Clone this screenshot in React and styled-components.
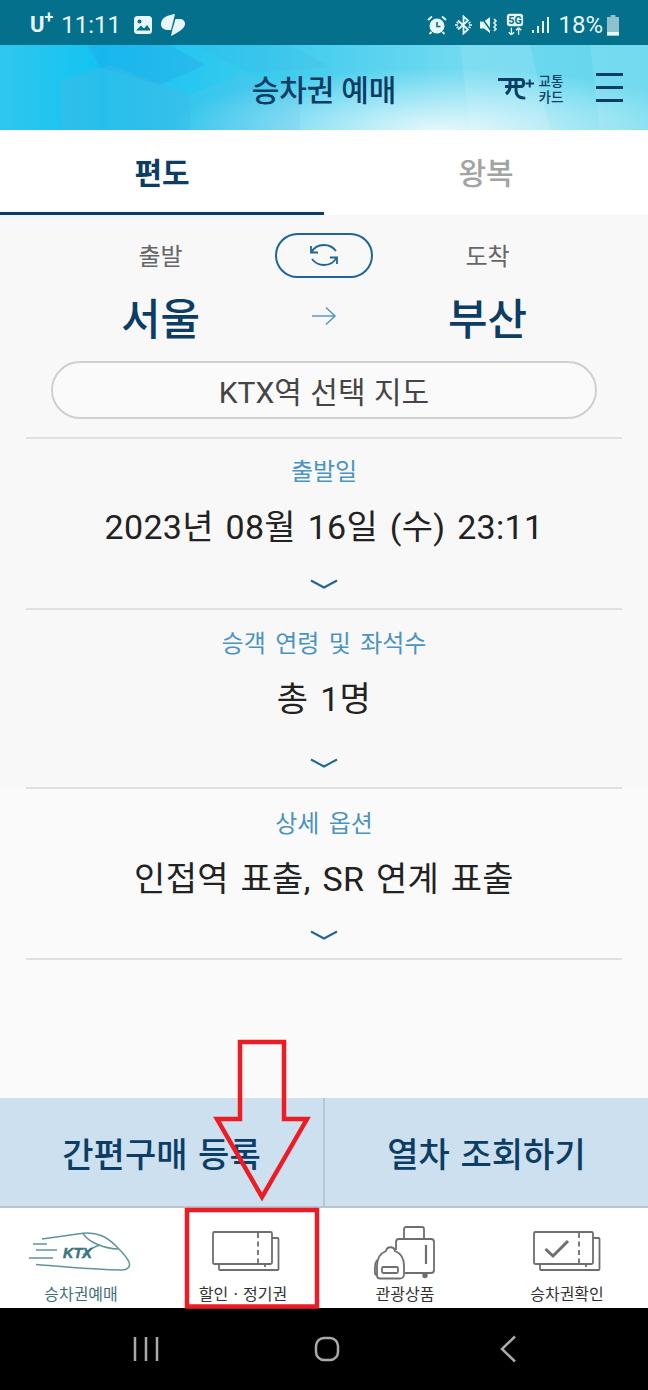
import React from 'react';
import styled, { createGlobalStyle } from 'styled-components';

const navy = '#0c3d64';
const blue = '#4a94c4';
const hangul = '"Noto Sans CJK KR", "Noto Sans", sans-serif';

const GlobalStyle = createGlobalStyle`
  html, body {
    margin: 0;
    padding: 0;
    background: #000;
  }
  body {
    font-family: ${hangul};
  }
`;

const Page = styled.div`
  position: relative;
  width: 648px;
  height: 1390px;
  display: flex;
  flex-direction: column;
  overflow: hidden;
  background: #f8f8f8;
`;

const StatusBar = styled.div`
  height: 45px;
  flex: none;
  box-sizing: border-box;
  padding: 4px 28px 0 30px;
  display: flex;
  align-items: center;
  justify-content: space-between;
  background: #04708c;
  color: #e8f6f9;
  font-family: "Roboto", sans-serif;
  font-size: 24px;
`;

const StatusGroup = styled.div`
  display: flex;
  align-items: center;
  gap: ${({ $gap }) => $gap || 6}px;
`;

const Carrier = styled.span`
  font-weight: 700;
  font-size: 22px;
  sup {
    font-size: 16px;
    line-height: 0;
    vertical-align: 9px;
  }
`;

const Header = styled.header`
  position: relative;
  height: 85px;
  flex: none;
  display: grid;
  grid-template-columns: 1fr auto 1fr;
  align-items: center;
  padding: 0 25px;
  box-sizing: border-box;
  overflow: hidden;
  background:
    radial-gradient(ellipse 270px 62px at 440px 85px, rgba(255, 255, 255, 0.82), rgba(255, 255, 255, 0)),
    linear-gradient(90deg, #2fc7ee 0%, #12c3f2 16%, #3ccbee 42%, #6fd9f0 70%, #63d6ee 100%);
`;

const HeaderArt = styled.svg`
  position: absolute;
  inset: 0;
`;

const Title = styled.h1`
  grid-column: 2;
  position: relative;
  margin: 0;
  font-size: 30px;
  font-weight: 500;
  color: ${navy};
  line-height: 1;
`;

const HeaderActions = styled.div`
  grid-column: 3;
  position: relative;
  justify-self: end;
  display: flex;
  align-items: center;
  gap: 32px;
`;

const CardLink = styled.div`
  display: flex;
  align-items: center;
  gap: 1px;
`;

const CardText = styled.span`
  font-size: 13.5px;
  line-height: 16px;
  color: ${navy};
  text-align: center;
  font-weight: 500;
  width: 26px;
  flex: none;
`;

const Menu = styled.div`
  width: 27px;
  height: 29px;
  display: flex;
  flex-direction: column;
  justify-content: space-between;
  span {
    display: block;
    height: 3px;
    background: ${navy};
  }
`;

const Tabs = styled.nav`
  height: 85px;
  flex: none;
  display: grid;
  grid-template-columns: 324px 1fr;
  background: #fff;
`;

const Tab = styled.div`
  display: flex;
  align-items: center;
  justify-content: center;
  box-sizing: border-box;
  font-size: 30px;
  font-weight: ${({ $active }) => ($active ? 700 : 500)};
  color: ${({ $active }) => ($active ? navy : '#a3a3a3')};
  border-bottom: 3px solid ${({ $active }) => ($active ? navy : 'transparent')};
`;

const Main = styled.main`
  flex: 1;
  min-height: 0;
  display: flex;
  flex-direction: column;
  background: #f8f8f8;
`;

const Route = styled.section`
  display: grid;
  grid-template-columns: 1fr 98px 1fr;
  grid-template-rows: 44px 78px;
  padding: 18px 0 6px;
  align-items: center;
  justify-items: center;
`;

const Place = styled.div`
  width: 100%;
  box-sizing: border-box;
  text-align: center;
  padding: ${({ $side }) => ($side === 'left' ? '0 0 0 46px' : '0 46px 0 0')};
`;

const PlaceLabel = styled(Place)`
  font-size: 24px;
  color: #666;
  line-height: 1;
`;

const PlaceName = styled(Place)`
  font-size: 43px;
  font-weight: 500;
  color: ${navy};
  line-height: 1;
`;

const SwapButton = styled.div`
  width: 98px;
  height: 45px;
  box-sizing: border-box;
  border: 2px solid #1f6695;
  border-radius: 23px;
  display: flex;
  align-items: center;
  justify-content: center;
`;

const MapButton = styled.div`
  height: 58px;
  margin: 0 51px 18px;
  box-sizing: border-box;
  border: 2px solid #cfcfcf;
  border-radius: 29px;
  display: flex;
  align-items: center;
  justify-content: center;
  font-family: "Roboto", ${hangul};
  font-size: 30px;
  word-spacing: 1px;
  color: #454545;
  background: #fafafa;
`;

const Option = styled.section`
  height: ${({ $height }) => $height}px;
  margin: 0 26px;
  box-sizing: border-box;
  border-top: 2px solid #e0e0e0;
  padding-top: ${({ $pad }) => $pad}px;
  display: flex;
  flex-direction: column;
  align-items: center;
`;

const OptionLabel = styled.div`
  font-size: 24px;
  line-height: 32px;
  word-spacing: 4px;
  color: ${blue};
`;

const OptionValue = styled.div`
  margin-top: 18px;
  font-family: "Roboto", ${hangul};
  font-size: 34px;
  line-height: 46px;
  letter-spacing: 0.3px;
  word-spacing: 3px;
  color: #222;
`;

const Chevron = styled.svg`
  margin-top: ${({ $top }) => $top}px;
`;

const Lower = styled.div`
  flex: 1;
  background: #fafafa;
`;

const LastRule = styled.div`
  margin: 0 26px;
  border-top: 2px solid #e0e0e0;
`;

const Actions = styled.div`
  height: 110px;
  flex: none;
  box-sizing: border-box;
  display: grid;
  grid-template-columns: 323px 1fr;
  background: #cde0ef;
  border-bottom: 2px solid #b9c6cf;
`;

const ActionButton = styled.div`
  display: flex;
  align-items: center;
  justify-content: center;
  font-size: 34px;
  font-weight: 500;
  word-spacing: 3px;
  color: ${navy};
  border-left: ${({ $divider }) => ($divider ? '2px solid #b5c7d5' : 'none')};
`;

const BottomNav = styled.nav`
  height: 100px;
  flex: none;
  display: grid;
  grid-template-columns: repeat(4, 1fr);
  background: #fff;
`;

const NavItem = styled.div`
  display: flex;
  flex-direction: column;
  align-items: center;
  justify-content: flex-end;
  padding-bottom: 4px;
  box-sizing: border-box;
`;

const NavIcon = styled.svg`
  display: block;
  margin-bottom: ${({ $below }) => $below}px;
  margin-left: ${({ $nudge }) => $nudge || 0}px;
`;

const NavLabel = styled.span`
  font-size: 16px;
  line-height: 22px;
  color: ${({ $teal }) => ($teal ? '#3f6f78' : '#333')};
`;

const SystemBar = styled.div`
  height: 82px;
  flex: none;
  display: grid;
  grid-template-columns: repeat(3, 1fr);
  align-items: center;
  justify-items: center;
  padding: 0 48px 0 55px;
  background: #000;
`;

const Annotation = styled.svg`
  position: absolute;
  inset: 0;
  pointer-events: none;
`;

const Down = ({ top }) => (
  <Chevron $top={top} width="30" height="12" viewBox="0 0 30 12" fill="none">
    <path d="M2 2.5 15 9.5 28 2.5" stroke="#1f6695" strokeWidth="2" />
  </Chevron>
);

const StatusLeftIcons = () => (
  <>
    <svg width="20" height="20" viewBox="0 0 20 20" style={{ marginLeft: 4 }}>
      <rect x="1" y="1" width="18" height="18" rx="3.5" fill="#e8f6f9" />
      <circle cx="6.5" cy="6.5" r="2" fill="#04708c" />
      <path d="M3 15.5 8 10.5 11 13.5 14 10 17 14V15.5Z" fill="#04708c" />
    </svg>
    <svg width="25" height="22" viewBox="0 0 25 22" fill="#e8f6f9">
      <path d="M14 0C6 1 0 4 0 10c0 4 3 6 8 6h2Z" />
      <path d="M14.500 5H19c3 0 5 2 5 5 0 4-6 8-14 12l1.500-7Z" />
    </svg>
  </>
);

const StatusRightIcons = () => (
  <StatusGroup $gap={8}>
    <svg width="20" height="20" viewBox="0 0 20 20">
      <circle cx="10" cy="11" r="7.500" fill="#e8f6f9" />
      <path d="M10 7v4.500h3.500" stroke="#04708c" strokeWidth="1.600" fill="none" />
      <path d="M1 5 5 1.500M19 5l-4-3.500M4.500 17l-2 2M15.500 17l2 2" stroke="#e8f6f9" strokeWidth="1.800" />
    </svg>
    <svg width="17" height="20" viewBox="0 0 17 20" fill="none" stroke="#e8f6f9" strokeWidth="1.800">
      <path d="M3 5.500 13 14.500 8.500 18.500V1.500L13 5.500 3 14.500" />
      <path d="M0 10h3M14 10h3M1.500 7l2 1.500M15.500 7l-2 1.500M1.500 13l2-1.500M15.500 13l-2-1.500" strokeWidth="1.400" />
    </svg>
    <svg width="18" height="20" viewBox="0 0 18 20">
      <path d="M0 6.500h4L10 2v16l-6-4.500H0Z" fill="#e8f6f9" />
      <path d="M1 2 12 17" stroke="#04708c" strokeWidth="1.500" />
      <path d="M14 3l2 2-2 2 2 2-2 2 2 2-2 2" stroke="#e8f6f9" strokeWidth="1.600" fill="none" transform="translate(0 1)" />
    </svg>
    <svg width="18" height="25" viewBox="0 0 20 25">
      <rect x="1" y="0.500" width="18" height="14" rx="3" fill="#e8f6f9" />
      <text x="10" y="12" textAnchor="middle" fontSize="12" fontWeight="700" fontFamily="Roboto, sans-serif" fill="#04708c">5G</text>
      <path d="M6 16v8M6 24l-3-3M6 24l3-3M14 24v-8M14 16l-3 3M14 16l3 3" stroke="#e8f6f9" strokeWidth="1.500" fill="none" />
    </svg>
    <svg width="18" height="18" viewBox="0 0 18 18" fill="#e8f6f9">
      <rect x="0" y="14" width="2" height="3" />
      <rect x="5" y="10" width="2" height="7" />
      <rect x="10" y="5" width="2" height="12" />
      <rect x="15" y="1" width="2" height="16" />
    </svg>
    <span>18%</span>
    <svg width="14" height="24" viewBox="0 0 14 24" style={{ marginLeft: -5 }}>
      <path d="M4.500 2h5v2H13v18.500H1V4h3.500Z" fill="#8fc2cc" />
      <rect x="1" y="19" width="12" height="3.500" fill="#e8f6f9" />
    </svg>
  </StatusGroup>
);

const TrainIcon = () => (
  <NavIcon $below={8} $nudge={1} width="108" height="44" viewBox="0 0 108 44" fill="none">
    <g stroke="#5f949c" strokeWidth="1.500">
      <path d="M14 9 55 3.300C70 2 79 7 88 16c6 6 11 11 13 16 2 5-2 8-7 8-25 0-56-3-86-5.500" />
      <path d="M55 3.300C60 12 76 18.500 90 19" />
      <path d="M5 14H19M8 20H29M1 28H25" />
      <path d="M55 25C60 20 65 17 72 15" />
    </g>
    <text x="35" y="28" fontSize="14.500" fontWeight="700" fontStyle="italic" fontFamily="'Liberation Sans', sans-serif" fill="#3c7480" stroke="#3c7480" strokeWidth="0.500">KTX</text>
  </NavIcon>
);

const TicketIcon = ({ check, nudge }) => (
  <NavIcon $below={8} $nudge={nudge} width="68" height="44" viewBox="0 0 68 44" fill="none">
    <g stroke="#6e6e6e" strokeWidth="1.800">
      <path d="M60 8h5.500a1 1 0 0 1 1 1v30a1 1 0 0 1-1 1H8a1 1 0 0 1-1-1v-5" />
      <rect x="1" y="2" width="59" height="32" rx="1.500" />
      <path d="M46 3v30" strokeDasharray="5 3.500" />
      <path d="M53 34v6" strokeDasharray="3 2" />
      {check && <path d="M12.500 19 20 26 35 11" strokeWidth="3" />}
    </g>
  </NavIcon>
);

const LuggageIcon = () => (
  <NavIcon $below={0} width="62" height="56" viewBox="0 0 62 56" fill="none">
    <g stroke="#6e6e6e" strokeWidth="1.800">
      <path d="M30 12V3a2 2 0 0 1 2-2H48a2 2 0 0 1 2 2v9.700" />
      <path d="M22 24V16a3 3 0 0 1 3-3H57a3 3 0 0 1 3 3V44a3 3 0 0 1-3 3H31" />
      <path d="M52 19V38" strokeWidth="2.200" />
      <circle cx="51" cy="49.500" r="1.800" fill="#6e6e6e" />
      <path d="M6 52.500H26a4 4 0 0 0 4-4V40C30 32 26 27 21 25 20 20 13 20 12 25 7 27 3 32 3 40V49.500a3 3 0 0 0 3 3Z" />
      <path d="M3 34C1.500 36 .9 38 .9 42V46C.9 48 2 49 3 49" />
      <rect x="8" y="41" width="16" height="6" rx="1.500" />
    </g>
  </NavIcon>
);

const App = () => (
  <Page>
    <GlobalStyle />
    <StatusBar>
      <StatusGroup $gap={8}>
        <Carrier>U<sup>+</sup></Carrier>
        <span>11:11</span>
        <StatusLeftIcons />
      </StatusGroup>
      <StatusRightIcons />
    </StatusBar>

    <Header>
      <HeaderArt width="648" height="85" viewBox="0 0 648 85">
        <path d="M88 0H170L205 20 160 40 100 22Z" fill="#2a8fe0" opacity="0.22" />
        <path d="M60 36 110 20 190 50V85H62Z" fill="#58b4e0" opacity="0.32" />
        <path d="M190 50 245 28 300 50V85H190Z" fill="#7cc4e8" opacity="0.18" />
        <path d="M196 0H290L330 22 250 28Z" fill="#38a8dc" opacity="0.14" />
        <path d="M460 0H530L550 85H470Z" fill="#ffffff" opacity="0.12" />
        <path d="M590 0H648V85H600Z" fill="#ffffff" opacity="0.1" />
      </HeaderArt>
      <Title>승차권 예매</Title>
      <HeaderActions>
        <CardLink>
          <svg width="40" height="24" viewBox="0 0 40 24" fill="none" stroke={navy} strokeWidth="3">
            <path d="M1 3.500H24c3.500 0 3.500 7 0 7H8" />
            <path d="M13 4V11c0 3-1.500 5-4 7" />
            <path d="M19 4V14c0 5 2 8 8 8" strokeLinecap="round" />
            <path d="M28.500 7.500H37M32.750 3.500V11.500" strokeWidth="2" />
          </svg>
          <CardText>교통<br />카드</CardText>
        </CardLink>
        <Menu><span /><span /><span /></Menu>
      </HeaderActions>
    </Header>

    <Tabs>
      <Tab $active>편도</Tab>
      <Tab>왕복</Tab>
    </Tabs>

    <Main>
      <Route>
        <PlaceLabel $side="left">출발</PlaceLabel>
        <SwapButton>
          <svg width="28" height="24" viewBox="0 0 28 24" fill="none" stroke="#1f6695" strokeWidth="1.800">
            <path d="M1 3v6.500h7" />
            <path d="M1.500 9.500C4 4 9 2 14 2c5 0 9 2 12 6" />
            <path d="M27 21v-6.500h-7" />
            <path d="M26.500 14.500C24 20 19 22 14 22c-5 0-9-2-12-6" />
          </svg>
        </SwapButton>
        <PlaceLabel $side="right">도착</PlaceLabel>
        <PlaceName $side="left">서울</PlaceName>
        <svg width="26" height="20" viewBox="0 0 26 20" fill="none" stroke="#5b9ac8" strokeWidth="1.600">
          <path d="M1 10h23M15 1.500 24 10l-9 8.500" />
        </svg>
        <PlaceName $side="right">부산</PlaceName>
      </Route>

      <MapButton>KTX역 선택 지도</MapButton>

      <Option $height={171} $pad={15}>
        <OptionLabel>출발일</OptionLabel>
        <OptionValue>2023년 08월 16일 (수) 23:11</OptionValue>
        <Down top={28} />
      </Option>
      <Option $height={179} $pad={16}>
        <OptionLabel>승객 연령 및 좌석수</OptionLabel>
        <OptionValue>총 1명</OptionValue>
        <Down top={35} />
      </Option>
      <Lower>
        <Option $height={171} $pad={17}>
          <OptionLabel>상세 옵션</OptionLabel>
          <OptionValue>인접역 표출, SR 연계 표출</OptionValue>
          <Down top={27} />
        </Option>
        <LastRule />
      </Lower>
    </Main>

    <Actions>
      <ActionButton>간편구매 등록</ActionButton>
      <ActionButton $divider>열차 조회하기</ActionButton>
    </Actions>

    <BottomNav>
      <NavItem>
        <TrainIcon />
        <NavLabel $teal>승차권예매</NavLabel>
      </NavItem>
      <NavItem>
        <TicketIcon nudge={6} />
        <NavLabel>할인ㆍ정기권</NavLabel>
      </NavItem>
      <NavItem>
        <LuggageIcon />
        <NavLabel>관광상품</NavLabel>
      </NavItem>
      <NavItem>
        <TicketIcon check />
        <NavLabel>승차권확인</NavLabel>
      </NavItem>
    </BottomNav>

    <SystemBar>
      <svg width="26" height="26" viewBox="0 0 26 26" stroke="#aaa" strokeWidth="2.500">
        <path d="M2 1v24M13 1v24M24 1v24" />
      </svg>
      <svg width="26" height="26" viewBox="0 0 26 26" fill="none" stroke="#aaa" strokeWidth="2.500">
        <rect x="2" y="2" width="22" height="22" rx="8" />
      </svg>
      <svg width="18" height="28" viewBox="0 0 18 28" fill="none" stroke="#aaa" strokeWidth="2.500">
        <path d="M15 1.500 2 14l13 12.500" />
      </svg>
    </SystemBar>

    <Annotation width="648" height="1390" viewBox="0 0 648 1390" fill="none" stroke="#ed1c24">
      <path d="M240 1042H284V1119H307L262 1197 217 1119H240Z" strokeWidth="4.500" strokeLinejoin="miter" />
      <rect x="187" y="1210" width="130" height="96.500" strokeWidth="4.500" />
    </Annotation>
  </Page>
);

export default App;
